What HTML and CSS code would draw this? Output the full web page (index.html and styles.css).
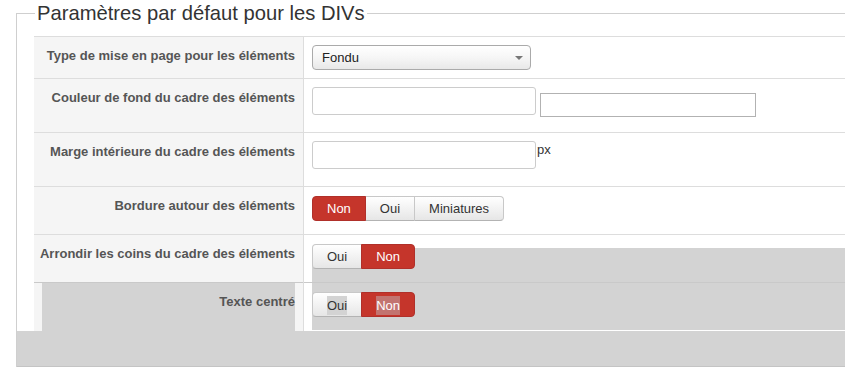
FILE: index.html
```html
<!DOCTYPE html>
<html lang="fr">
<head>
    <meta charset="UTF-8">
    <title>Paramètres par défaut pour les DIVs</title>
    <link rel="stylesheet" href="styles.css">
</head>
<body>
    <fieldset class="settings">
        <legend>Paramètres par défaut pour les DIVs</legend>

        <table class="form-table">
            <tr class="row-select">
                <td class="label">Type de mise en page pour les éléments</td>
                <td class="value">
                    <div class="select">Fondu<span class="caret"></span></div>
                </td>
            </tr>
            <tr class="row-input">
                <td class="label">Couleur de fond du cadre des éléments</td>
                <td class="value">
                    <div class="field-line">
                        <input type="text" class="text-input">
                        <input type="text" class="color-input">
                    </div>
                </td>
            </tr>
            <tr class="row-input">
                <td class="label">Marge intérieure du cadre des éléments</td>
                <td class="value">
                    <div class="field-line">
                        <input type="text" class="text-input">
                        <span class="unit">px</span>
                    </div>
                </td>
            </tr>
            <tr class="row-toggle">
                <td class="label">Bordure autour des éléments</td>
                <td class="value">
                    <div class="btn-group">
                        <button class="btn active">Non</button><button class="btn">Oui</button><button class="btn">Miniatures</button>
                    </div>
                </td>
            </tr>
            <tr class="row-toggle">
                <td class="label">Arrondir les coins du cadre des éléments</td>
                <td class="value">
                    <div class="hl-box">
                        <div class="btn-group">
                            <button class="btn">Oui</button><button class="btn active">Non</button>
                        </div>
                    </div>
                </td>
            </tr>
            <tr class="row-toggle last">
                <td class="label">
                    <div class="hl-label">Texte centré</div>
                </td>
                <td class="value">
                    <div class="hl-box">
                        <div class="btn-group">
                            <button class="btn"><span class="hl-text">Oui</span></button><button class="btn active"><span class="hl-text">Non</span></button>
                        </div>
                    </div>
                </td>
            </tr>
        </table>

        <div class="form-footer"></div>
    </fieldset>
</body>
</html>
```

FILE: styles.css
```css
html, body {
    margin: 0;
    overflow: hidden;
}
body {
    background: #fff;
    font-family: "Liberation Sans", Arial, sans-serif;
    color: #333;
}
.settings {
    width: 900px;
    margin: 1px 0 0 16px;
    padding: 0;
    border: 1px solid #cfcfcf;
    border-right: none;
    border-bottom: none;
}
.settings legend {
    margin-left: 18px;
    padding: 0 2px;
    font-size: 20.2px;
    line-height: 24px;
    color: #333;
}
.form-table {
    margin: 11px 0 0 17px;
    width: 883px;
    table-layout: fixed;
    border-collapse: collapse;
    font-size: 13px;
}
.form-table td {
    border-top: 1px solid #ddd;
    vertical-align: top;
    padding: 0;
}
.form-table .label {
    width: 257px;
    padding: 10px 8px 0 4px;
    background: #f5f5f5;
    border-right: 1px solid #ddd;
    text-align: right;
    font-weight: bold;
    color: #555;
    line-height: 18px;
    white-space: nowrap;
}
.form-table .value {
    padding: 8px 0 0 8px;
}
.row-select .label { height: 31px; }
.row-input .label { height: 43px; }
.row-toggle .label { height: 37px; }
.form-table .row-toggle .value { padding-top: 9px; }

/* select */
.select {
    position: relative;
    width: 208px;
    height: 23px;
    padding-left: 9px;
    border: 1px solid #aaa;
    border-radius: 4px;
    background: linear-gradient(#fff, #f6f6f6 50%, #e8e8e8);
    line-height: 23px;
    font-size: 13px;
    color: #222;
}
.caret {
    position: absolute;
    right: 7px;
    top: 10px;
    border-left: 4px solid transparent;
    border-right: 4px solid transparent;
    border-top: 4px solid #777;
}

/* inputs */
.field-line {
    display: flex;
    align-items: flex-start;
}
.text-input {
    width: 224px;
    height: 28px;
    box-sizing: border-box;
    border: 1px solid #ccc;
    border-radius: 3px;
    margin: 0;
}
.color-input {
    width: 216px;
    height: 24px;
    box-sizing: border-box;
    margin: 6px 0 0 4px;
    border: 1px solid #b2b2b2;
    border-radius: 0;
}
.unit {
    margin-left: 1px;
    line-height: 18px;
    font-size: 13px;
    color: #333;
}

/* toggle buttons */
.btn-group {
    display: flex;
}
.btn {
    height: 25px;
    margin: 0;
    padding: 0 14px;
    border: 1px solid #c8c8c8;
    border-bottom-color: #b3b3b3;
    background: linear-gradient(#fff, #e6e6e6);
    font-family: "Liberation Sans", Arial, sans-serif;
    font-size: 13px;
    line-height: 23px;
    color: #333;
}
.btn + .btn {
    margin-left: -1px;
}
.btn:first-child {
    border-radius: 4px 0 0 4px;
}
.btn:last-child {
    border-radius: 0 4px 4px 0;
}
.btn.active {
    background: #c5352b;
    border-color: #b0302a;
    color: #fff;
    position: relative;
}

/* highlighted areas */
.hl-box {
    height: 38px;
    background: linear-gradient(transparent 4px, #d3d3d3 4px);
}
.form-table .last td {
    border-top-color: #c9c9c9;
}
.form-table .last .label {
    height: 48px;
    padding: 0 8px;
}
.form-table .last .value {
    padding-top: 0;
}
.last .hl-box {
    height: 38px;
    padding-top: 9px;
    background: #d3d3d3;
}
.hl-label {
    height: 38px;
    padding-top: 10px;
    background: #d3d3d3;
}
.hl-text {
    display: inline-block;
    vertical-align: top;
    line-height: 19px;
    margin-top: 3px;
    background: #d3d3d3;
}
.btn.active .hl-text {
    background: #c27470;
}
.form-footer {
    height: 35px;
    border-bottom: 1px solid #c4c4c4;
    background: #d3d3d3;
}
```
